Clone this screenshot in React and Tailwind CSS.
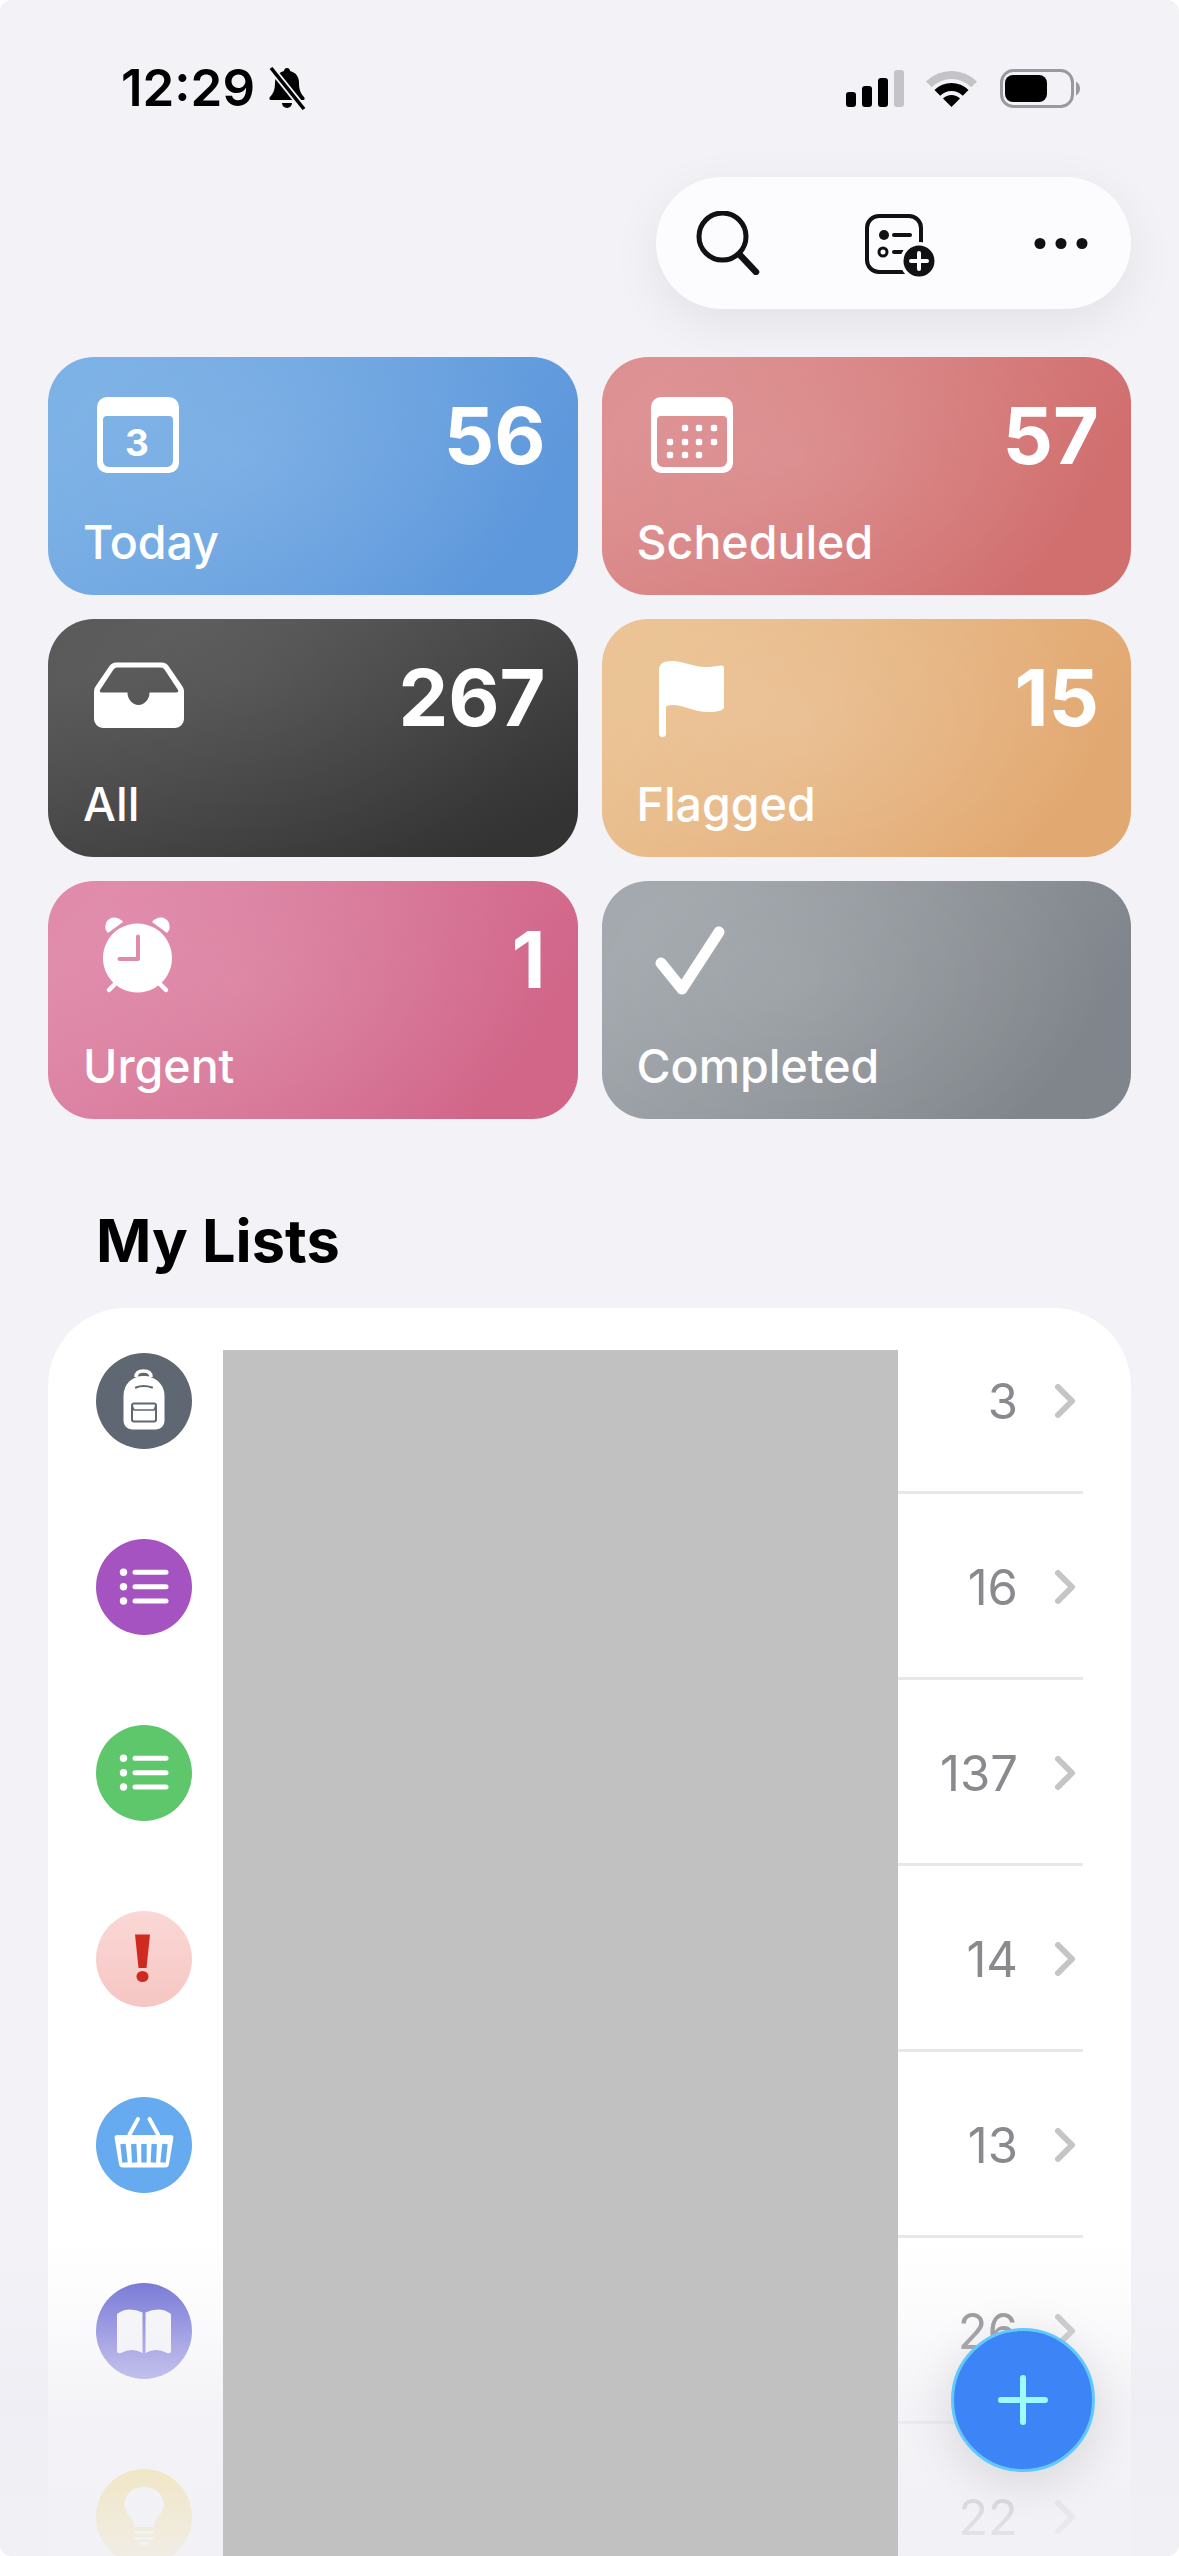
import React from 'react'

const CalendarFrame = ({ children }) => (
  <svg viewBox="0 0 100 100" className="w-[100px] h-[100px]" fill="white">
    <path
      fillRule="evenodd"
      d="M19 12H81a10 10 0 0 1 10 10V78a10 10 0 0 1-10 10H19a10 10 0 0 1-10-10V22a10 10 0 0 1 10-10zM19 31a4 4 0 0 0-4 4V76a6 6 0 0 0 6 6H79a6 6 0 0 0 6-6V35a4 4 0 0 0-4-4z"
    />
    {children}
  </svg>
)

const TodayIcon = () => (
  <CalendarFrame>
    <text x="49" y="71" textAnchor="middle" fontSize="37" fontWeight="700" fontFamily="Inter, sans-serif">3</text>
  </CalendarFrame>
)

const ScheduledIcon = () => {
  const dots = [[43, 43], [57, 43], [72, 43], [28, 57], [43, 57], [57, 57], [72, 57], [28, 70], [43, 70], [57, 70]]
  return (
    <CalendarFrame>
      {dots.map(([x, y]) => (
        <rect key={`${x}-${y}`} x={x - 3.2} y={y - 3.2} width="6.4" height="6.4" rx="2" />
      ))}
    </CalendarFrame>
  )
}

const InboxIcon = () => (
  <svg viewBox="0 0 100 100" className="w-[100px] h-[100px]" fill="white">
    <path
      fillRule="evenodd"
      d="M28 15.5H74Q78 15.5 80.5 19L93.5 38Q96 41 96 44V72a9 9 0 0 1-9 9H15a9 9 0 0 1-9-9V44Q6 41 8.5 38L21.5 19Q24 15.5 28 15.5zM29 20.5Q27 20.5 25.5 22.5L12 43Q11 45.5 14 45.5H39.5A11 12.5 0 0 0 61.5 45.5H88Q91 45.5 90 43L76.5 22.5Q75 20.5 73 20.5z"
    />
  </svg>
)

const FlagIcon = () => (
  <svg viewBox="0 0 100 100" className="w-[100px] h-[100px]" fill="white">
    <path d="M17 23Q17 14 30 14C42 14 50 20 64 20C72 20 76 18.5 80 18.5Q82 18.5 82 21V60Q82 65 66 65C52 65 42 58 30 58Q26 58 24 59.5V86.5a3.5 3.5 0 0 1-7 0z" />
  </svg>
)

const AlarmIcon = () => (
  <svg viewBox="0 0 100 100" className="w-[100px] h-[100px]" fill="white">
    <path
      fillRule="evenodd"
      d="M49.5 14.5a34.5 34.5 0 1 1-.01 0zM48 27.5a2 2 0 0 1 4 0V50a2 2 0 0 1-2 2H31.5a2 2 0 0 1 0-4H48z"
    />
    <path d="M20 24Q16 20 18 14Q21 8 27 8.5Q32 9 35 13z" />
    <path d="M79 24Q83 20 81 14Q78 8 72 8.5Q67 9 64 13z" />
    <path d="M27 75L21 81M72 75L78 81" stroke="white" strokeWidth="4.5" strokeLinecap="round" />
  </svg>
)

const CheckIcon = () => (
  <svg viewBox="0 0 100 100" className="w-[100px] h-[100px]" fill="none">
    <path d="M19 54L40 80L77 23" stroke="white" strokeWidth="11" strokeLinecap="round" strokeLinejoin="round" />
  </svg>
)

const ListGlyph = () => (
  <svg viewBox="0 0 96 96" className="w-[96px] h-[96px]" fill="white">
    {[33.3, 47.7, 62].map((y) => (
      <g key={y}>
        <circle cx="27.5" cy={y} r="3.7" />
        <line x1="39" x2="70" y1={y} y2={y} stroke="white" strokeWidth="5" strokeLinecap="round" />
      </g>
    ))}
  </svg>
)

const BackpackGlyph = () => (
  <svg viewBox="0 0 96 96" className="w-[96px] h-[96px]" fill="none">
    <path d="M40 24Q40 18 47.5 18Q55 18 55 24" stroke="white" strokeWidth="3.5" />
    <path fill="white" d="M47.5 23C36 23 27.5 31 27.5 43V68a8.5 8.5 0 0 0 8.5 8.5H60a8.5 8.5 0 0 0 8.5-8.5V43C68.5 31 59 23 47.5 23z" />
    <path d="M40 34.5Q47.5 31.5 56 34.5" stroke="#5f6872" strokeWidth="2.2" strokeLinecap="round" />
    <rect x="36" y="50.5" width="24" height="18" rx="2" stroke="#5f6872" strokeWidth="2" />
    <path d="M36 52.5L38 57H58L60 52.5" stroke="#5f6872" strokeWidth="1.6" />
  </svg>
)

const ExclamationGlyph = () => (
  <svg viewBox="0 0 96 96" className="w-[96px] h-[96px]" fill="#cf2a1f">
    <path d="M39 23.5H54L50.5 57H42.5z" />
    <ellipse cx="46.5" cy="65.5" rx="6" ry="5.5" />
  </svg>
)

const BasketGlyph = () => (
  <svg viewBox="0 0 96 96" className="w-[96px] h-[96px]" fill="white">
    <path d="M33.5 37.5L42 22M62 37.5L53.5 22" stroke="white" strokeWidth="4" strokeLinecap="round" />
    <path d="M21 38H75a2.5 2.5 0 0 1 2.4 3L73 67a4 4 0 0 1-4 3.5H27a4 4 0 0 1-4-3.5L18.6 41A2.5 2.5 0 0 1 21 38z" />
    <path d="M27 47L29 65.5M37.7 47L38.7 65.5M48 47V65.5M58.3 47L57.3 65.5M69 47L67 65.5" stroke="#66abef" strokeWidth="5.4" />
  </svg>
)

const BookGlyph = () => (
  <svg viewBox="0 0 96 96" className="w-[96px] h-[96px]" fill="#f7f7fb">
    <path d="M21 31Q32 23 46.5 29.5V70Q36 64 25 70Q21 71 21 68z" />
    <path d="M75 31Q64 23 49.5 29.5V70Q60 64 71 70Q75 71 75 68z" />
  </svg>
)

const BulbGlyph = () => (
  <svg viewBox="0 0 96 96" className="w-[96px] h-[96px]" fill="white">
    <path d="M48 18C37 18 28.5 25 28.5 35C28.5 41 31 44.5 34 48C36 50.5 38 53 38 58H58C58 53 60 50.5 62 48C65 44.5 67.5 41 67.5 35C67.5 25 59 18 48 18z" />
    <rect x="38" y="62" width="20" height="3" rx="1.5" />
    <rect x="38" y="68" width="20" height="3" rx="1.5" />
    <path d="M42 73H54Q52 77 48 77Q44 77 42 73z" />
  </svg>
)

const tiles = [
  { label: 'Today', count: '56', Icon: TodayIcon, bg: 'bg-[radial-gradient(ellipse_60%_85%_at_36%_42%,rgba(255,255,255,0.1),rgba(255,255,255,0)),linear-gradient(125deg,#78afe5_10%,#5e98dc_85%)]' },
  { label: 'Scheduled', count: '57', Icon: ScheduledIcon, bg: 'bg-[radial-gradient(ellipse_60%_85%_at_36%_42%,rgba(255,255,255,0.12),rgba(255,255,255,0)),linear-gradient(125deg,#dc8c8d_10%,#d16e6e_85%)]' },
  { label: 'All', count: '267', Icon: InboxIcon, bg: 'bg-[radial-gradient(ellipse_60%_85%_at_36%_25%,rgba(255,255,255,0.05),rgba(255,255,255,0)),linear-gradient(155deg,#575757_15%,#333333_90%)]' },
  { label: 'Flagged', count: '15', Icon: FlagIcon, bg: 'bg-[radial-gradient(ellipse_60%_85%_at_36%_42%,rgba(255,255,255,0.14),rgba(255,255,255,0)),linear-gradient(125deg,#eac08f_10%,#e2a871_85%)]' },
  { label: 'Urgent', count: '1', Icon: AlarmIcon, bg: 'bg-[radial-gradient(ellipse_60%_85%_at_36%_42%,rgba(255,255,255,0.1),rgba(255,255,255,0)),linear-gradient(125deg,#df87a7_10%,#d16689_85%)]' },
  { label: 'Completed', count: '', Icon: CheckIcon, bg: 'bg-[radial-gradient(ellipse_60%_85%_at_36%_42%,rgba(255,255,255,0.1),rgba(255,255,255,0)),linear-gradient(125deg,#a0a6ab_10%,#80858b_85%)]' },
]

const lists = [
  { count: '3', Glyph: BackpackGlyph, bg: 'bg-[#5f6872]' },
  { count: '16', Glyph: ListGlyph, bg: 'bg-[#a653c2]' },
  { count: '137', Glyph: ListGlyph, bg: 'bg-[#5ec76b]' },
  { count: '14', Glyph: ExclamationGlyph, bg: 'bg-gradient-to-b from-[#fad8d5] to-[#f6c6c3]' },
  { count: '13', Glyph: BasketGlyph, bg: 'bg-[#66abef]' },
  { count: '26', Glyph: BookGlyph, bg: 'bg-gradient-to-b from-[#6c6cd3] to-[#9d97e6]' },
  { count: '22', Glyph: BulbGlyph, bg: 'bg-[#f5d250]' },
]

const Tile = ({ tile }) => {
  const { label, count, Icon, bg } = tile
  return (
    <div className={`h-[238px] rounded-[46px] flex flex-col pt-[28px] pl-[35px] pr-[32px] text-white ${bg}`}>
      <div className="flex justify-between items-center h-[100px]">
        <div className="ml-[5px]">
          <Icon />
        </div>
        <span className="text-[79px] leading-[100px] font-bold">{count}</span>
      </div>
      <span className="text-[46.5px] leading-[56px] font-medium mt-[29px]">{label}</span>
    </div>
  )
}

const ListRow = ({ item }) => {
  const { count, Glyph, bg } = item
  return (
    <div className="flex items-center h-[186px] shrink-0">
      <div className={`w-[96px] h-[96px] rounded-full ml-[48px] shrink-0 ${bg}`}>
        <Glyph />
      </div>
      <div className="flex-1 h-full ml-[31px] mr-[48px] pt-[3px] flex items-center justify-end border-b-[3px] border-[#e8e8ea]">
        <span className="text-[49px] text-[#8a8a8e] mt-[2px]">{count}</span>
        <svg viewBox="0 0 20 34" className="w-[20px] h-[34px] ml-[37px] mr-[8px]" fill="none">
          <path d="M3 3L17 17L3 31" stroke="#c5c5c7" strokeWidth="6" strokeLinecap="round" strokeLinejoin="round" />
        </svg>
      </div>
    </div>
  )
}

const StatusBar = () => (
  <div className="h-[56px] mt-[60px] flex items-center justify-between text-black">
    <div className="flex items-center ml-[73px]">
      <span className="text-[51px] leading-[56px] font-semibold">12:29</span>
      <svg viewBox="0 0 40 43" className="w-[40px] h-[43px] ml-[12px]">
        <path d="M20 1c2 0 3 1.5 3 3 6 1.5 9 6 9 12 0 7 2 11 5 14 1 1 1 3-1 3H4c-2 0-2-2-1-3 3-3 5-7 5-14 0-6 3-10.5 9-12 0-1.5 1-3 3-3z" />
        <path d="M15 36h10a5 5 0 0 1-10 0z" />
        <path d="M4 1L37 42" stroke="#f2f2f7" strokeWidth="7" />
        <path d="M4 1L37 42" stroke="black" strokeWidth="3.5" />
      </svg>
    </div>
    <div className="flex items-center mr-[51px]">
      <svg viewBox="0 0 58 37" className="w-[58px] h-[37px]">
        <rect x="0" y="22" width="10" height="15" rx="3" />
        <rect x="16" y="16" width="10" height="21" rx="3" />
        <rect x="32" y="8" width="10" height="29" rx="3" />
        <rect x="48" y="0" width="10" height="37" rx="3" fill="#c4c4c6" />
      </svg>
      <svg viewBox="0 0 51 37" className="w-[51px] h-[37px] ml-[22px]">
        <path fill="#c4c4c6" d="M0 11.5A36 36 0 0 1 51 11.5L45.3 17.2A28 28 0 0 0 5.7 17.2z" />
        <path d="M8.5 20A24 24 0 0 1 42.5 20L36.8 25.7A16 16 0 0 0 14.2 25.7z" />
        <path d="M17 28.5A12 12 0 0 1 34 28.5L25.5 37z" />
      </svg>
      <svg viewBox="0 0 80 39" className="w-[80px] h-[39px] ml-[23px]" fill="none">
        <rect x="1.5" y="1.5" width="71" height="36" rx="12" stroke="#9a9a9e" strokeWidth="3" />
        <rect x="5" y="6" width="42" height="27" rx="8" fill="black" />
        <path d="M76 12.5Q80 15 80 19.5Q80 24 76 26.5z" fill="#9a9a9e" />
      </svg>
    </div>
  </div>
)

const Toolbar = () => (
  <div className="flex justify-end mt-[61px]">
    <div className="w-[475px] h-[132px] rounded-[66px] bg-[#fcfcfe] shadow-[0_14px_50px_rgba(0,0,0,0.07)] flex items-center pl-[40px]">
      <svg viewBox="0 0 64 64" className="w-[64px] h-[64px]" fill="none">
        <circle cx="26.5" cy="25.5" r="23.5" stroke="#111114" strokeWidth="5" />
        <path d="M44 44L60 61" stroke="#111114" strokeWidth="6.5" strokeLinecap="round" />
      </svg>
      <svg viewBox="0 0 70 64" className="w-[70px] h-[64px] ml-[105px] mt-[6px]" fill="none">
        <rect x="2" y="2" width="54" height="56" rx="12" stroke="#111114" strokeWidth="4" />
        <circle cx="19" cy="21" r="5" fill="#111114" />
        <path d="M29 21H45" stroke="#111114" strokeWidth="4" strokeLinecap="round" />
        <circle cx="18" cy="38" r="4" stroke="#111114" strokeWidth="3" />
        <path d="M29 38H38" stroke="#111114" strokeWidth="4" strokeLinecap="round" />
        <circle cx="54" cy="47" r="19" fill="#fcfcfe" />
        <circle cx="54" cy="47" r="15.5" fill="#111114" />
        <path d="M54 39V55M46 47H62" stroke="white" strokeWidth="4" strokeLinecap="round" />
      </svg>
      <svg viewBox="0 0 54 11" className="w-[54px] h-[11px] ml-[99px]" fill="#111114">
        <circle cx="6" cy="5.5" r="5.5" />
        <circle cx="27" cy="5.5" r="5.5" />
        <circle cx="48" cy="5.5" r="5.5" />
      </svg>
    </div>
  </div>
)

export default function App() {
  return (
    <div className="bg-white w-[1179px] h-[2556px] font-['Inter',sans-serif]">
      <div className="relative w-full h-full rounded-[12px] bg-[#f2f2f7] overflow-hidden px-[48px] flex flex-col">
        <StatusBar />
        <Toolbar />

        <div className="grid grid-cols-2 gap-[24px] mt-[48px]">
          {tiles.map((tile) => (
            <Tile key={tile.label} tile={tile} />
          ))}
        </div>

        <h2 className="text-[59.5px] leading-[72px] font-bold text-black ml-[48px] mt-[85px]">My Lists</h2>

        <div className="relative flex flex-col bg-white rounded-t-[78px] mt-[32px] flex-1 min-h-0">
          {lists.map((item) => (
            <ListRow key={item.count} item={item} />
          ))}
          {/* blanked out names, sits above the fade */}
          <div className="absolute left-[175px] top-[42px] bottom-[-100px] w-[675px] bg-[#c1c1c1] z-20" />
        </div>

        <div className="absolute left-0 right-0 bottom-0 h-[316px] z-10 bg-[linear-gradient(to_bottom,rgba(236,236,242,0)_0%,rgba(236,236,242,0.22)_25%,rgba(236,236,242,0.6)_53%,rgba(240,240,245,0.9)_100%)]" />

        <button className="absolute left-[951px] top-[2328px] w-[144px] h-[144px] rounded-full z-30 bg-[#3d85f7] border-[3px] border-[#62c8fb] shadow-[0_10px_50px_rgba(0,0,0,0.12)] flex items-center justify-center">
          <svg viewBox="0 0 50 50" className="w-[50px] h-[50px]" fill="none">
            <path d="M25 3V47M3 25H47" stroke="#9bfbff" strokeWidth="6" strokeLinecap="round" />
          </svg>
        </button>
      </div>
    </div>
  )
}
